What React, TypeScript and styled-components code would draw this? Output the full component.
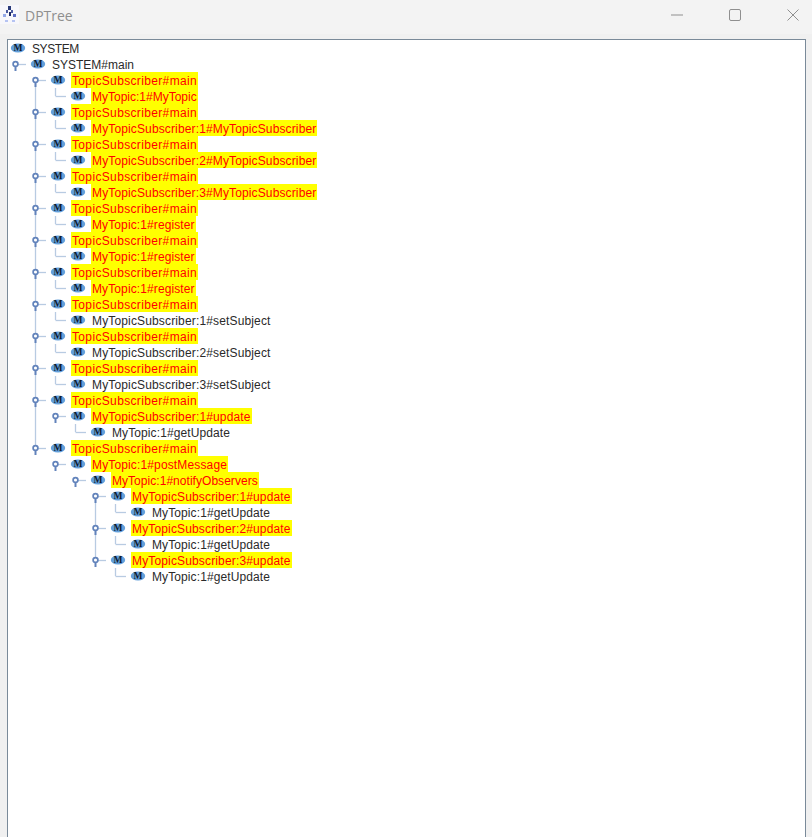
import React from "react";
import styled, { createGlobalStyle } from "styled-components";

const Global = createGlobalStyle`
  html, body { margin: 0; padding: 0; background: #eeeeee; }
  #root { width: 812px; height: 837px; overflow: hidden; }
`;

const Frame = styled.div`
  width: 812px;
  height: 837px;
  display: flex;
  flex-direction: column;
  background: #f0f0f0;
  font-family: "Liberation Sans", Arial, sans-serif;
`;

const TitleBar = styled.header`
  height: 34px;
  flex: none;
  display: flex;
  align-items: flex-start;
  background: #f3f3f3;
`;

const AppIcon = styled.svg`
  width: 19px;
  height: 19px;
  margin-top: 5px;
  flex: none;
`;

const Title = styled.span`
  margin: 6px 0 0 6px;
  line-height: 20px;
  font-family: "Open Sans", "Noto Sans", sans-serif;
  font-size: 14px;
  color: #8f8f8f;
`;

const Controls = styled.div`
  margin-left: auto;
  padding-right: 13px;
  display: flex;
  align-items: center;
  gap: 46px;
`;

const ControlButton = styled.div`
  width: 12px;
  height: 29px;
  display: flex;
  align-items: center;
  justify-content: center;
`;

const TreePanel = styled.main`
  flex: 1;
  margin: 5px 6px 0 7px;
  background: #ffffff;
  border: 1px solid #7a8a99;
  border-bottom: none;
  overflow: hidden;
`;

const Row = styled.div<{ $depth: number }>`
  height: 16px;
  display: flex;
  align-items: center;
  padding-left: ${(p) => p.$depth * 20}px;
  position: relative;
`;

const Guides = styled.svg`
  position: absolute;
  left: 0;
  top: 0;
  width: 400px;
  height: 16px;
`;

const NodeIcon = styled.svg`
  width: 16px;
  height: 10px;
  flex: none;
  margin-left: 2px;
  position: relative;
`;

const Label = styled.span<{ $hot: boolean; $track: number }>`
  margin-left: 5px;
  padding: 0 1px;
  height: 16px;
  line-height: 18px;
  font-size: 12px;
  letter-spacing: ${(p) => p.$track}px;
  white-space: nowrap;
  position: relative;
  color: ${(p) => (p.$hot ? "#ff0000" : "#2a2a2a")};
  background: ${(p) => (p.$hot ? "#ffff00" : "transparent")};
`;

type Node = { d: number; t: string; hot?: boolean };

const T = "TopicSubscriber#main";
const nodes: Node[] = [
  { d: 0, t: "SYSTEM" },
  { d: 1, t: "SYSTEM#main" },
  { d: 2, t: T, hot: true },
  { d: 3, t: "MyTopic:1#MyTopic", hot: true },
  { d: 2, t: T, hot: true },
  { d: 3, t: "MyTopicSubscriber:1#MyTopicSubscriber", hot: true },
  { d: 2, t: T, hot: true },
  { d: 3, t: "MyTopicSubscriber:2#MyTopicSubscriber", hot: true },
  { d: 2, t: T, hot: true },
  { d: 3, t: "MyTopicSubscriber:3#MyTopicSubscriber", hot: true },
  { d: 2, t: T, hot: true },
  { d: 3, t: "MyTopic:1#register", hot: true },
  { d: 2, t: T, hot: true },
  { d: 3, t: "MyTopic:1#register", hot: true },
  { d: 2, t: T, hot: true },
  { d: 3, t: "MyTopic:1#register", hot: true },
  { d: 2, t: T, hot: true },
  { d: 3, t: "MyTopicSubscriber:1#setSubject" },
  { d: 2, t: T, hot: true },
  { d: 3, t: "MyTopicSubscriber:2#setSubject" },
  { d: 2, t: T, hot: true },
  { d: 3, t: "MyTopicSubscriber:3#setSubject" },
  { d: 2, t: T, hot: true },
  { d: 3, t: "MyTopicSubscriber:1#update", hot: true },
  { d: 4, t: "MyTopic:1#getUpdate" },
  { d: 2, t: T, hot: true },
  { d: 3, t: "MyTopic:1#postMessage", hot: true },
  { d: 4, t: "MyTopic:1#notifyObservers", hot: true },
  { d: 5, t: "MyTopicSubscriber:1#update", hot: true },
  { d: 6, t: "MyTopic:1#getUpdate" },
  { d: 5, t: "MyTopicSubscriber:2#update", hot: true },
  { d: 6, t: "MyTopic:1#getUpdate" },
  { d: 5, t: "MyTopicSubscriber:3#update", hot: true },
  { d: 6, t: "MyTopic:1#getUpdate" },
];

function trackFor(t: string) {
  if (t === "SYSTEM") return -0.4;
  if (t === T) return 0.35;
  if (t.endsWith("#MyTopicSubscriber")) return 0.135;
  if (t.endsWith("#register")) return 0.11;
  if (t.endsWith("#setSubject")) return 0.15;
  if (t.endsWith("#update")) return 0.15;
  if (t.endsWith("#getUpdate")) return 0.1;
  if (t.endsWith("#postMessage")) return 0.14;
  if (t.endsWith("#notifyObservers")) return 0.04;
  return 0;
}

const LINE = "#b8cbe2";
const HANDLE = "#6283bb";

function hasChild(i: number) {
  return i + 1 < nodes.length && nodes[i + 1].d > nodes[i].d;
}
function continues(i: number, d: number) {
  for (let j = i + 1; j < nodes.length; j++) {
    if (nodes[j].d < d) return false;
    if (nodes[j].d === d) return true;
  }
  return false;
}

const lineX = (d: number) => 7.5 + (d - 1) * 20;

function RowGuides({ i }: { i: number }) {
  const n = nodes[i];
  const parts: React.ReactNode[] = [];
  for (let d = 1; d < n.d; d++) {
    if (continues(i, d)) {
      parts.push(<line key={"v" + d} x1={lineX(d)} x2={lineX(d)} y1={0} y2={16} stroke={LINE} strokeWidth={1.3} />);
    }
  }
  if (n.d > 0) {
    const x = lineX(n.d);
    const toggle = hasChild(i);
    const first = nodes[i - 1].d < n.d;
    if (!(toggle && first)) {
      parts.push(<line key="up" x1={x} x2={x} y1={0} y2={8} stroke={LINE} strokeWidth={1.3} />);
    }
    if (continues(i, n.d)) {
      parts.push(<line key="down" x1={x} x2={x} y1={8} y2={16} stroke={LINE} strokeWidth={1.3} />);
    }
    parts.push(<line key="h" x1={x} x2={x + 10.5} y1={8.5} y2={8.5} stroke={LINE} strokeWidth={1.3} />);
    if (toggle) {
      parts.push(
        <g key="handle">
          <line x1={x} x2={x} y1={9} y2={15} stroke={HANDLE} strokeWidth={2} />
          <circle cx={x} cy={8} r={2.4} fill="#ffffff" stroke={HANDLE} strokeWidth={1.7} />
        </g>
      );
    }
  }
  return <Guides aria-hidden="true">{parts}</Guides>;
}

function MethodIcon() {
  return (
    <NodeIcon viewBox="0 0 16 10">
      <ellipse cx="8" cy="5" rx="7.2" ry="4.6" fill="#639fda" />
      <text
        x="8"
        y="8"
        textAnchor="middle"
        fontFamily="'Liberation Serif', serif"
        fontWeight="700"
        fontSize="9.5"
        fill="#0c1a30"
      >
        M
      </text>
    </NodeIcon>
  );
}

export default function App() {
  return (
    <Frame>
      <Global />
      <TitleBar>
        <AppIcon viewBox="0 0 19 19">
          <rect x="0" y="0" width="19" height="19" fill="#f7f7fb" />
          <rect x="8" y="1" width="3" height="4" fill="#2a3a78" />
          <rect x="6" y="5" width="2" height="3" fill="#4a5aa0" />
          <rect x="11" y="5" width="2" height="3" fill="#4a5aa0" />
          <rect x="9" y="7" width="2" height="4" fill="#1f2c66" />
          <rect x="3" y="9" width="3" height="3" fill="#93a8e8" />
          <rect x="13" y="9" width="3" height="3" fill="#5c6cc0" />
          <rect x="5" y="15" width="3" height="2" fill="#b5c3f2" />
          <rect x="12" y="15" width="3" height="2" fill="#b5c3f2" />
        </AppIcon>
        <Title>DPTree</Title>
        <Controls>
          <ControlButton>
            <svg width="12" height="2"><line x1="0" x2="12" y1="1" y2="1" stroke="#8f8f8f" /></svg>
          </ControlButton>
          <ControlButton>
            <svg width="12" height="12"><rect x="0.5" y="0.5" width="11" height="11" rx="1.5" fill="none" stroke="#8f8f8f" /></svg>
          </ControlButton>
          <ControlButton>
            <svg width="12" height="12"><path d="M0.5 0.5L11.5 11.5M11.5 0.5L0.5 11.5" stroke="#8f8f8f" fill="none" /></svg>
          </ControlButton>
        </Controls>
      </TitleBar>
      <TreePanel>
        {nodes.map((n, i) => (
          <Row key={i} $depth={n.d}>
            <RowGuides i={i} />
            <MethodIcon />
            <Label $hot={!!n.hot} $track={trackFor(n.t)}>{n.t}</Label>
          </Row>
        ))}
      </TreePanel>
    </Frame>
  );
}
